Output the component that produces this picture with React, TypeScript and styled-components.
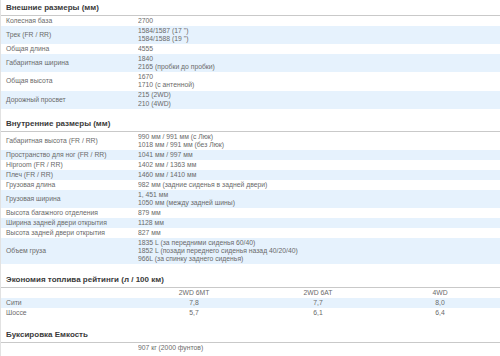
import React from "react";
import styled, { createGlobalStyle } from "styled-components";

const Global = createGlobalStyle`
  html, body {
    margin: 0;
    padding: 0;
    background: #fff;
    overflow: hidden;
  }
`;

const Page = styled.div`
  width: 500px;
  height: 356px;
  overflow: hidden;
  border-left: 1px solid #e2e2e2;
  box-sizing: border-box;
  font-family: "Liberation Sans", Arial, sans-serif;
  color: #6a6a6a;
`;

const Section = styled.section<{ $gap?: number }>`
  margin-top: ${(p) => p.$gap ?? 7}px;

  &:first-child {
    margin-top: 0;
  }
`;

const Heading = styled.h2`
  margin: 0;
  height: 15px;
  line-height: 15px;
  padding: 0 5px;
  font-size: 8px;
  font-weight: 700;
  color: #3a3a3a;
  border-bottom: 1px solid #c9c9c9;
  white-space: nowrap;
`;

const Rows = styled.div`
  & > :nth-child(even) {
    background: #e6f2fd;
  }
`;

const Row = styled.div<{ $cols?: string }>`
  display: grid;
  grid-template-columns: ${(p) => p.$cols ?? "137px 1fr"};
  align-items: center;
  padding: 0.9px 0;
  font-size: 6.8px;
  line-height: 8.2px;
  white-space: nowrap;
`;

const Label = styled.div`
  padding-left: 5px;
`;

const Value = styled.div<{ $center?: boolean }>`
  text-align: ${(p) => (p.$center ? "center" : "left")};
  overflow: hidden;
`;

type Spec = [string, string[]];

const outer: Spec[] = [
  ["Колесная база", ["2700"]],
  ["Трек (FR / RR)", ["1584/1587 (17 \")", "1584/1588 (19 \")"]],
  ["Общая длина", ["4555"]],
  ["Габаритная ширина", ["1840", "2165 (пробки до пробки)"]],
  ["Общая высота", ["1670", "1710 (с антенной)"]],
  ["Дорожный просвет", ["215 (2WD)", "210 (4WD)"]],
];

const inner: Spec[] = [
  ["Габаритная высота (FR / RR)", ["990 мм / 991 мм (с Люк)", "1018 мм / 991 мм (без Люк)"]],
  ["Пространство для ног (FR / RR)", ["1041 мм / 997 мм"]],
  ["Hiproom (FR / RR)", ["1402 мм / 1363 мм"]],
  ["Плеч (FR / RR)", ["1460 мм / 1410 мм"]],
  ["Грузовая длина", ["982 мм (задние сиденья в задней двери)"]],
  ["Грузовая ширина", ["1, 451 мм", "1050 мм (между задней шины)"]],
  ["Высота багажного отделения", ["879 мм"]],
  ["Ширина задней двери открытия", ["1128 мм"]],
  ["Высота задней двери открытия", ["827 мм"]],
  [
    "Объем груза",
    [
      "1835 L (за передними сиденья 60/40)",
      "1852 L (позади переднего сиденья назад 40/20/40)",
      "966L (за спинку заднего сиденья)",
    ],
  ],
];

const fuelCols = "131px 124px 124px 1fr";

const fuel: [string, string, string, string][] = [
  ["", "2WD 6MT", "2WD 6AT", "4WD"],
  ["Сити", "7,8", "7,7", "8,0"],
  ["Шоссе", "5,7", "6,1", "6,4"],
];

const SpecTable = ({ items }: { items: Spec[] }) => (
  <Rows>
    {items.map(([label, values]) => (
      <Row key={label}>
        <Label>{label}</Label>
        <Value>
          {values.map((v) => (
            <div key={v}>{v}</div>
          ))}
        </Value>
      </Row>
    ))}
  </Rows>
);

export default function App() {
  return (
    <Page>
      <Global />
      <Section>
        <Heading>Внешние размеры (мм)</Heading>
        <SpecTable items={outer} />
      </Section>
      <Section>
        <Heading>Внутренние размеры (мм)</Heading>
        <SpecTable items={inner} />
      </Section>
      <Section $gap={8}>
        <Heading>Экономия топлива рейтинги (л / 100 км)</Heading>
        <Rows>
          {fuel.map(([label, a, b, c]) => (
            <Row key={label || "head"} $cols={fuelCols}>
              <Label>{label}</Label>
              <Value $center>{a}</Value>
              <Value $center>{b}</Value>
              <Value $center>{c}</Value>
            </Row>
          ))}
        </Rows>
      </Section>
      <Section $gap={9}>
        <Heading>Буксировка Емкость</Heading>
        <Rows>
          <Row>
            <Label></Label>
            <Value>907 кг (2000 фунтов)</Value>
          </Row>
        </Rows>
      </Section>
    </Page>
  );
}
